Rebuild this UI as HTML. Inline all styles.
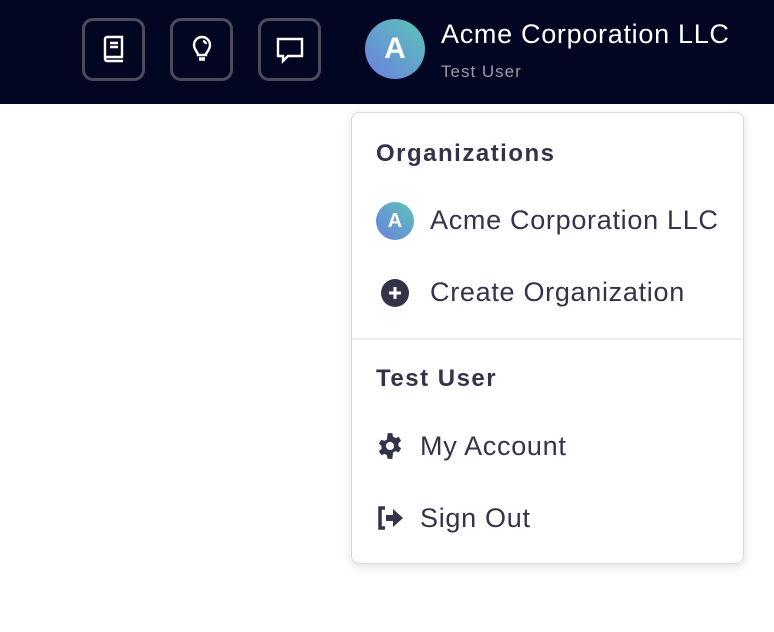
<!DOCTYPE html>
<html><head><style>
body{margin:0;width:774px;height:632px;background:#fff;font-family:"Liberation Sans",sans-serif;position:relative;overflow:hidden}
.hdr{position:absolute;left:0;top:0;width:774px;height:104px;background:#030622}
.btn{position:absolute;top:18px;width:57px;height:57px;border:3px solid #4b4b5c;border-radius:11px;display:flex;align-items:center;justify-content:center}
.av{position:absolute;border-radius:50%;background:linear-gradient(45deg,#6a7fe0,#5cc4b8);color:#fff;font-weight:bold;display:flex;align-items:center;justify-content:center}
.dd{position:absolute;left:351px;top:112px;width:391px;height:450px;border:1px solid #d8d8dc;border-radius:8px;box-shadow:0 3px 10px rgba(0,0,0,.12);background:#fff}
.t{position:absolute;color:#33344a;font-size:27px;letter-spacing:0.7px;white-space:nowrap}
.h{font-weight:bold;font-size:24px;letter-spacing:1.5px}
</style></head><body>
<div class="hdr">
<div class="btn" style="left:82px"><svg width="28" height="30" viewBox="0 0 28 30" fill="none" stroke="#fff" stroke-width="2.4"><path d="M5 24V4a2 2 0 0 1 2-2h15v20H7a2 2 0 0 0 0 4h16"/><path d="M10 8h8M10 12h8"/></svg></div>
<div class="btn" style="left:170px"><svg width="24" height="30" viewBox="0 0 24 30" fill="none" stroke="#fff" stroke-width="2.4"><path d="M8 20c0-3-4-5-4-10a8 8 0 0 1 16 0c0 5-4 7-4 10z"/><path d="M13 6a4 4 0 0 1 3 3"/><path d="M9 24h6" stroke-width="3.5"/></svg></div>
<div class="btn" style="left:258px"><svg width="30" height="30" viewBox="0 0 30 30" fill="none" stroke="#fff" stroke-width="2.4"><path d="M3 4h24v17H13l-5 5v-5H3z"/></svg></div>
<div class="av" style="left:365px;top:19px;width:60px;height:60px;font-size:30px">A</div>
<div style="position:absolute;left:441px;top:19px;color:#fff;font-size:27px;letter-spacing:0.7px;white-space:nowrap">Acme Corporation LLC</div>
<div style="position:absolute;left:441px;top:62px;color:#9a9aa8;font-size:17px;letter-spacing:1px">Test User</div>
</div>
<div class="dd"></div>
<div class="t h" style="left:376px;top:140px">Organizations</div>
<div class="av" style="left:376px;top:202px;width:38px;height:38px;font-size:20px">A</div>
<div class="t" style="left:430px;top:205px">Acme Corporation LLC</div>
<svg style="position:absolute;left:381px;top:279px" width="28" height="28" viewBox="0 0 28 28"><circle cx="14" cy="14" r="14" fill="#33344a"/><path d="M14 8v12M8 14h12" stroke="#fff" stroke-width="3"/></svg>
<div class="t" style="left:430px;top:277px">Create Organization</div>
<div style="position:absolute;left:352px;top:338px;width:391px;height:2px;background:#eee"></div>
<div class="t h" style="left:376px;top:365px">Test User</div>
<svg style="position:absolute;left:376px;top:432px" width="28" height="28" viewBox="0 0 24 24"><path fill="#33344a" d="M10 1h4l.6 3a8 8 0 0 1 2 1.2l2.9-1 2 3.4-2.3 2a8 8 0 0 1 0 2.4l2.3 2-2 3.4-2.9-1a8 8 0 0 1-2 1.2L14 23h-4l-.6-3a8 8 0 0 1-2-1.2l-2.9 1-2-3.4 2.3-2a8 8 0 0 1 0-2.4l-2.3-2 2-3.4 2.9 1a8 8 0 0 1 2-1.2zM12 8.5a3.5 3.5 0 1 0 0 7 3.5 3.5 0 0 0 0-7z"/></svg>
<div class="t" style="left:420px;top:431px">My Account</div>
<svg style="position:absolute;left:376px;top:505px" width="30" height="26" viewBox="0 0 30 26"><path d="M9 3H4v20h5" fill="none" stroke="#33344a" stroke-width="3.5"/><path fill="#33344a" d="M10 10h7V4l10 9-10 9v-6h-7z"/></svg>
<div class="t" style="left:420px;top:503px">Sign Out</div>
</body></html>
